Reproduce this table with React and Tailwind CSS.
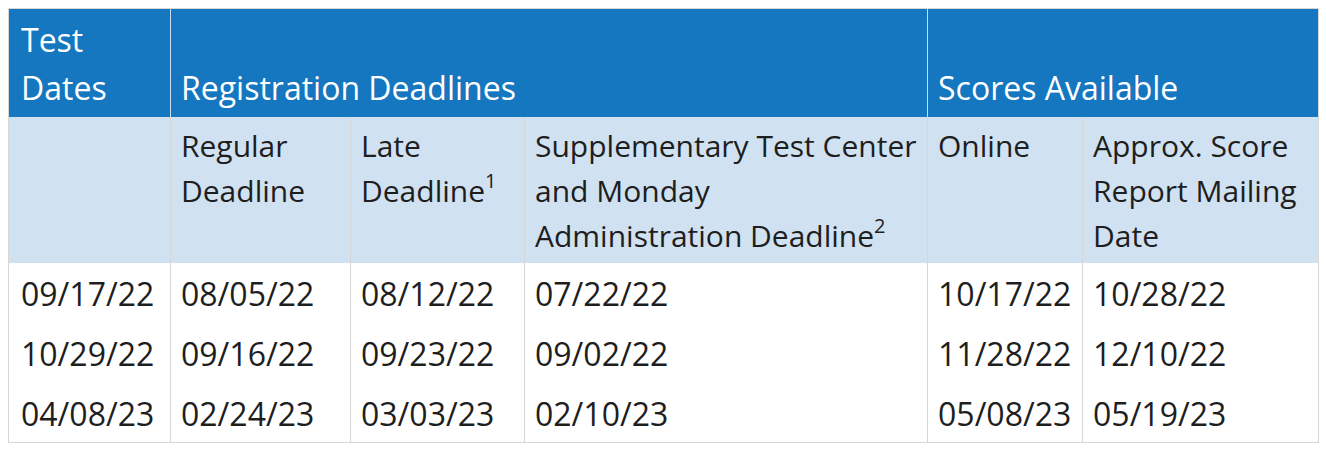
const rows = [
  ['09/17/22', '08/05/22', '08/12/22', '07/22/22', '10/17/22', '10/28/22'],
  ['10/29/22', '09/16/22', '09/23/22', '09/02/22', '11/28/22', '12/10/22'],
  ['04/08/23', '02/24/23', '03/03/23', '02/10/23', '05/08/23', '05/19/23'],
];

const Sup = ({ children }) => (
  <sup className="relative -top-[3px] align-super text-[20px] leading-none">{children}</sup>
);

export default function App() {
  return (
    <div className="bg-white p-2" style={{ fontFamily: '"Open Sans", "Noto Sans", sans-serif' }}>
      <table className="w-[1310px] table-fixed border-collapse border border-[#d6d6d6] text-[30px] leading-[45px] text-[#1e1e1e]">
        <colgroup>
          <col className="w-[162px]" />
          <col className="w-[180px]" />
          <col className="w-[174px]" />
          <col className="w-[403px]" />
          <col className="w-[155px]" />
          <col className="w-[236px]" />
        </colgroup>
        <thead>
          <tr className="bg-[#1477bf] text-[32px] leading-[48px] text-white">
            <th className="h-[108px] border-r border-[#c9dff0] px-[12px] pb-[5px] text-left align-bottom font-normal">
              Test Dates
            </th>
            <th colSpan={3} className="border-r border-[#c9dff0] px-[10px] pb-[5px] text-left align-bottom font-normal">
              Registration Deadlines
            </th>
            <th colSpan={2} className="px-[10px] pb-[5px] text-left align-bottom font-normal">
              Scores Available
            </th>
          </tr>
          <tr className="bg-[#d0e1f1]">
            <th className="h-[146px] border-r border-[#d6d6d6] px-[12px] pt-[6px] pb-[4px] text-left align-top font-normal" />
            <th className="border-r border-[#d6d6d6] px-[10px] pt-[6px] pb-[4px] text-left align-top font-normal">
              Regular Deadline
            </th>
            <th className="border-r border-[#d6d6d6] px-[10px] pt-[6px] pb-[4px] text-left align-top font-normal">
              Late Deadline<Sup>1</Sup>
            </th>
            <th className="border-r border-[#d6d6d6] px-[10px] pt-[6px] pb-[4px] text-left align-top font-normal">
              Supplementary Test Center and Monday Administration Deadline<Sup>2</Sup>
            </th>
            <th className="border-r border-[#d6d6d6] px-[10px] pt-[6px] pb-[4px] text-left align-top font-normal">
              Online
            </th>
            <th className="px-[10px] pt-[6px] pb-[4px] text-left align-top font-normal">
              Approx. Score Report Mailing Date
            </th>
          </tr>
        </thead>
        <tbody className="text-[32px]">
          {rows.map((row) => (
            <tr key={row[0]} className="h-[60px]">
              {row.map((cell, i) => (
                <td
                  key={i}
                  className={`pt-[2px] pb-0 text-left align-middle ${i === 0 ? 'px-[12px]' : 'px-[10px]'} ${
                    i < 5 ? 'border-r border-[#d6d6d6]' : ''
                  }`}
                >
                  {cell}
                </td>
              ))}
            </tr>
          ))}
        </tbody>
      </table>
    </div>
  );
}
